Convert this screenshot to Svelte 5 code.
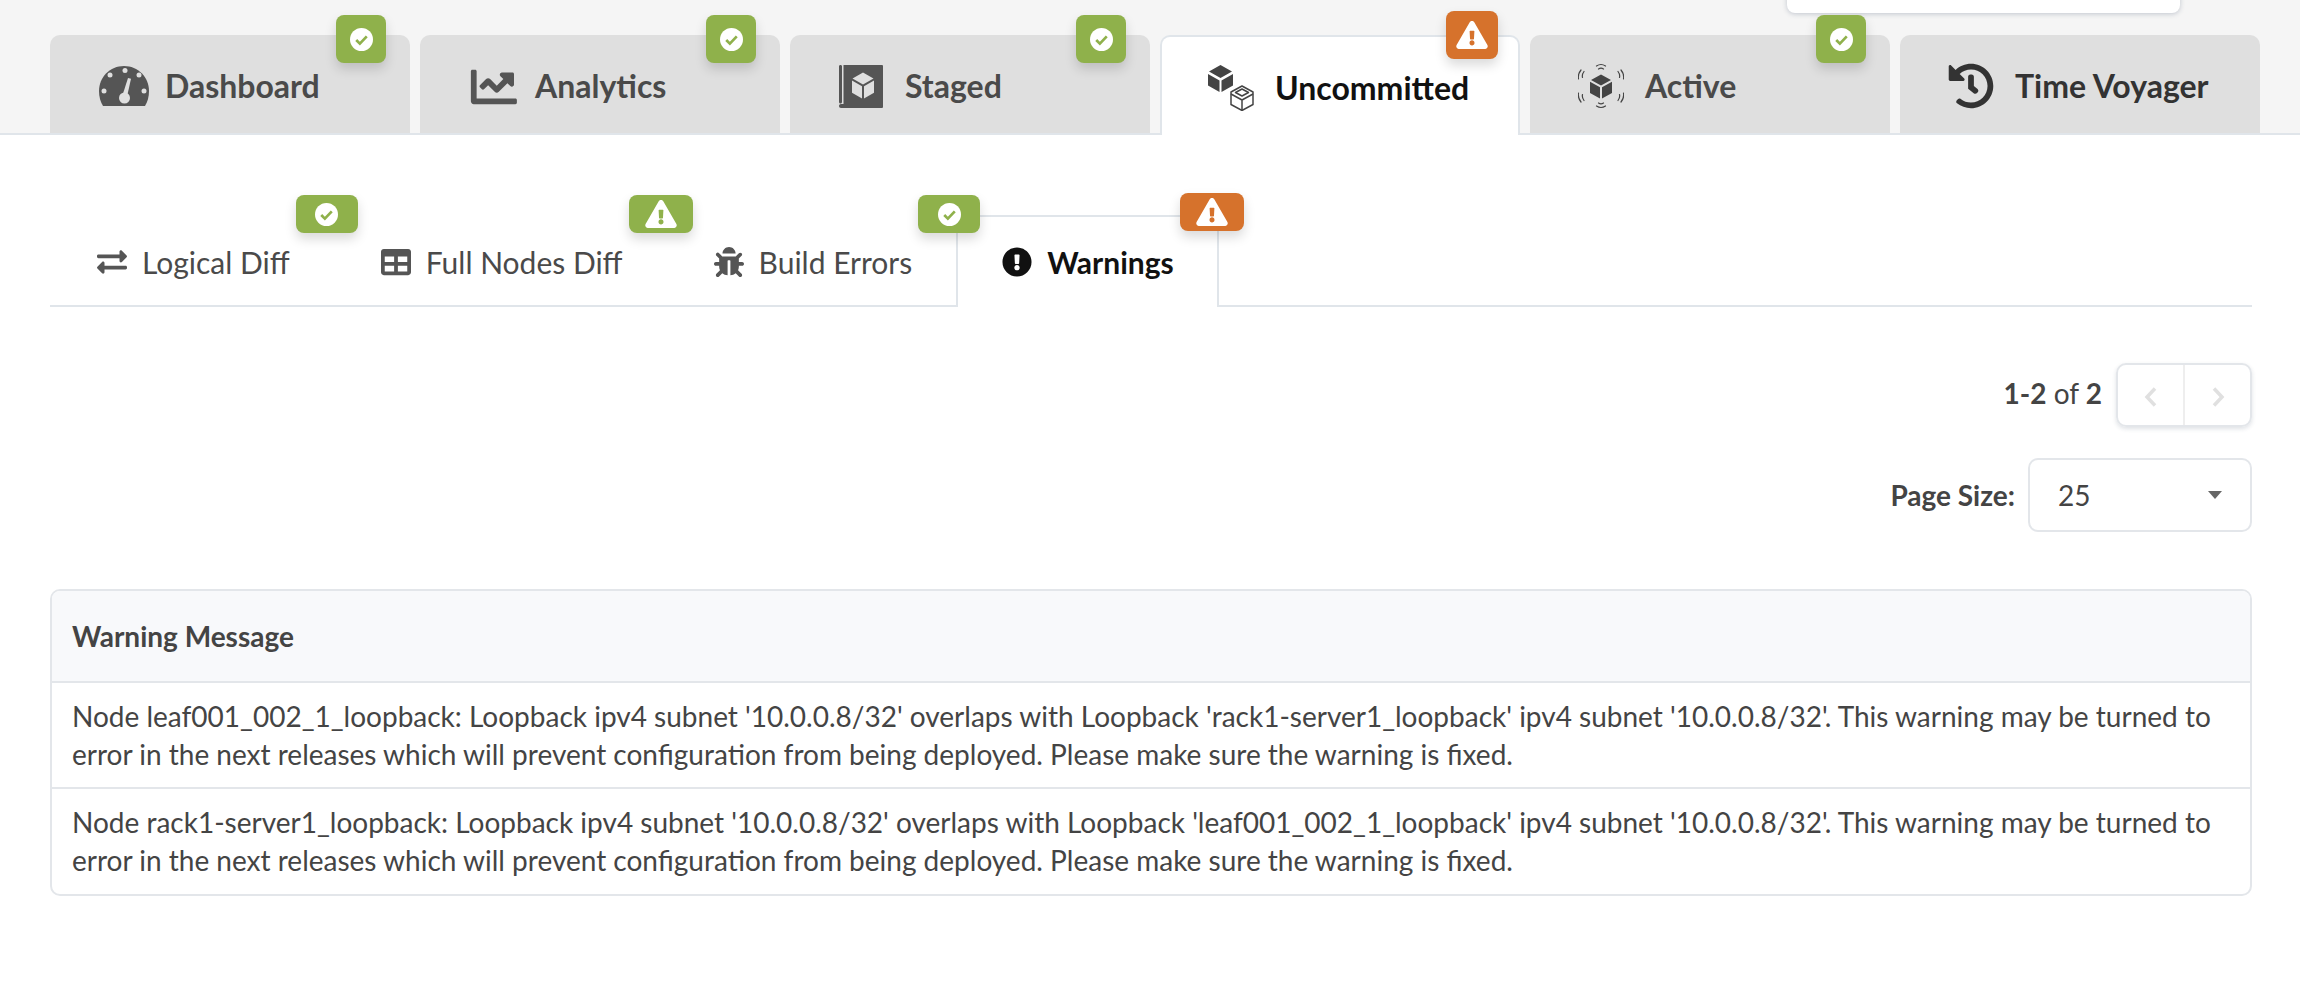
<script>
	const mainTabs = [
		{ id: 'dashboard', label: 'Dashboard', badge: 'ok' },
		{ id: 'analytics', label: 'Analytics', badge: 'ok' },
		{ id: 'staged', label: 'Staged', badge: 'ok' },
		{ id: 'uncommitted', label: 'Uncommitted', badge: 'warn', active: true },
		{ id: 'active', label: 'Active', badge: 'ok' },
		{ id: 'time', label: 'Time Voyager' }
	];

	const subTabs = [
		{ id: 'logical', label: 'Logical Diff', badge: 'ok', color: 'green' },
		{ id: 'full', label: 'Full Nodes Diff', badge: 'warn', color: 'green' },
		{ id: 'build', label: 'Build Errors', badge: 'ok', color: 'green' },
		{ id: 'warnings', label: 'Warnings', badge: 'warn', color: 'orange', active: true }
	];

	const warnings = [
		"Node leaf001_002_1_loopback: Loopback ipv4 subnet '10.0.0.8/32' overlaps with Loopback 'rack1-server1_loopback' ipv4 subnet '10.0.0.8/32'. This warning may be turned to error in the next releases which will prevent configuration from being deployed. Please make sure the warning is fixed.",
		"Node rack1-server1_loopback: Loopback ipv4 subnet '10.0.0.8/32' overlaps with Loopback 'leaf001_002_1_loopback' ipv4 subnet '10.0.0.8/32'. This warning may be turned to error in the next releases which will prevent configuration from being deployed. Please make sure the warning is fixed."
	];
</script>

{#snippet statusIcon(kind, color)}
	{#if kind === 'ok'}
		<svg class="status-ok" viewBox="0 0 24 24">
			<circle cx="12" cy="12" r="12" fill="#fff" />
			<path d="M6.5 12.5l3.8 3.8 7.2-7.6" fill="none" stroke={color} stroke-width="2.8" />
		</svg>
	{:else}
		<svg class="status-warn" viewBox="0 0 576 512">
			<path fill="#fff" d="M569.517 440.013C587.975 472.007 564.806 512 527.94 512H48.054c-36.937 0-59.999-40.055-41.577-71.987L246.423 24.035c18.467-32.009 64.72-31.951 83.154 0l239.94 416.978zM288 354c-25.405 0-46 20.595-46 46s20.595 46 46 46 46-20.595 46-46-20.595-46-46-46zm-43.673-165.346l7.418 136c.347 6.364 5.609 11.346 11.982 11.346h48.546c6.373 0 11.635-4.982 11.982-11.346l7.418-136c.375-6.874-5.098-12.654-11.982-12.654h-63.383c-6.884 0-12.356 5.78-11.981 12.654z" />
		</svg>
	{/if}
{/snippet}

{#snippet mainIcon(id)}
	{#if id === 'dashboard'}
		<svg class="main-icon" viewBox="-2 0 46 46" overflow="visible">
			<path fill="#555" d="M24 3C10 3-1 14-1 28c0 6 1.500 11 4 15h42c2.500-4 4-9 4-15C49 14 38 3 24 3z" />
			<g fill="#dfdfdf">
				<circle cx="25" cy="7.500" r="2.500" />
				<circle cx="10" cy="12" r="2.500" />
				<circle cx="39" cy="12" r="2.500" />
				<circle cx="4" cy="28" r="2.500" />
				<circle cx="44" cy="28" r="2.500" />
				<circle cx="24.500" cy="35" r="5.500" />
				<path d="M28 15l3 .8-4 18h-5z" />
			</g>
		</svg>
	{:else if id === 'analytics'}
		<svg class="main-icon" viewBox="-32 -10 512 512" overflow="visible">
			<path fill="#555" d="M496 384H64V80c0-8.840-7.160-16-16-16H16C7.160 64 0 71.160 0 80v336c0 17.670 14.330 32 32 32h464c8.840 0 16-7.160 16-16v-32c0-8.840-7.160-16-16-16zM464 96H345.940c-21.380 0-32.090 25.850-16.970 40.970l32.400 32.400L288 242.750l-73.370-73.370c-12.500-12.500-32.760-12.500-45.250 0l-68.690 68.690c-6.250 6.250-6.250 16.380 0 22.630l22.620 22.620c6.250 6.250 16.380 6.250 22.630 0L192 237.250l73.370 73.370c12.500 12.500 32.760 12.500 45.250 0l96-96 32.400 32.400c15.120 15.120 40.970 4.410 40.970-16.970V112c.010-8.840-7.150-16-16-16z" />
		</svg>
	{:else if id === 'staged'}
		<svg class="main-icon" viewBox="0 0 46 46">
			<path fill="#555" d="M1 3.500c0-1 .6-1.500 1.500-1.500S4 2.500 4 3.500V39c0 .8-.6 1.500-1.500 1.500S1 39.800 1 39zM5.500 2H44a1 1 0 0 1 1 1v41a1 1 0 0 1-1 1H3c-1.200 0-2-.8-2-2s.8-2 2-2h2.500z" />
			<path fill="#dfdfdf" d="M25 9.500l-10.500 6 10.500 6 10.500-6zM14 17.500l10 5.800v12.200l-10-5.800zM36 17.500v12.200l-10 5.800V23.300z" />
		</svg>
	{:else if id === 'uncommitted'}
		<svg class="main-icon" viewBox="0 0 46 46">
			<path fill="#444" d="M12.500 0L24 6.500 12.500 13 1 6.500zM0 9l11.500 6.500V27L0 20.500zM25 9v11.500L13.500 27V15.500z" />
			<g fill="none" stroke="#444" stroke-width="1.500" stroke-linejoin="round">
				<path d="M34 21l11 6v12.500L34 45.500l-11-6V27z" />
				<path d="M23 29l11 6 11-6M34 35v10.500" />
				<path d="M34 24l6.500 3.500-6.500 3.500-6.500-3.500z" />
			</g>
		</svg>
	{:else if id === 'active'}
		<svg class="main-icon" viewBox="0 0 46 46">
			<path fill="#444" d="M23 11.500l10 5.500-10 5.500-10-5.500zM12 18.800l10 5.500v11.200l-10-5.500zM34 18.800v11.200l-10 5.500V24.300z" />
			<g fill="none" stroke="#444" stroke-width="1.200" stroke-linecap="round">
				<path d="M18.500 3c3-2 6-2 9 0M20.500 6c1.600-1 3.400-1 5 0" />
				<path d="M18.500 43c3 2 6 2 9 0M20.500 40c1.600 1 3.400 1 5 0" />
				<path d="M3 7c-2.500 3-3 6-2.500 9M6 8.500c-1.500 2-2 4-1.500 6" />
				<path d="M43 7c2.500 3 3 6 2.500 9M40 8.500c1.500 2 2 4 1.500 6" />
				<path d="M3 39c-2.500-3-3-6-2.500-9M6 37.500c-1.500-2-2-4-1.500-6" />
				<path d="M43 39c2.500-3 3-6 2.500-9M40 37.500c1.500-2 2-4 1.500-6" />
			</g>
		</svg>
	{:else if id === 'time'}
		<svg class="main-icon" viewBox="0 0 512 512">
			<path fill="#333" d="M504 255.531c.253 136.640-111.180 248.372-247.820 248.468-59.015.042-113.223-20.530-155.822-54.911-11.077-8.940-11.905-25.541-1.839-35.607l11.267-11.267c8.609-8.609 22.353-9.551 31.891-1.984C173.062 425.135 212.781 440 256 440c101.705 0 184-82.311 184-184 0-101.705-82.311-184-184-184-48.814 0-93.149 18.969-126.068 49.932l50.754 50.754c10.080 10.080 2.941 27.314-11.313 27.314H24c-8.837 0-16-7.163-16-16V38.627c0-14.254 17.234-21.393 27.314-11.314l49.372 49.372C129.209 34.136 189.552 8 256 8c136.810 0 247.747 110.780 248 247.531zm-180.912 78.784l9.823-12.630c8.138-10.463 6.253-25.542-4.210-33.679L288 256.349V152c0-13.255-10.745-24-24-24h-16c-13.255 0-24 10.745-24 24v135.651l65.409 50.874c10.463 8.137 25.541 6.253 33.679-4.210z" />
		</svg>
	{/if}
{/snippet}

{#snippet subIcon(id)}
	{#if id === 'logical'}
		<svg class="sub-icon" viewBox="0 0 512 512">
			<path fill="#555" d="M0 168v-16c0-13.255 10.745-24 24-24h360V80c0-21.367 25.899-32.042 40.971-16.971l80 80c9.372 9.373 9.372 24.569 0 33.941l-80 80C409.956 271.982 384 261.456 384 240v-48H24c-13.255 0-24-10.745-24-24zm488 152H128v-48c0-21.314-25.862-32.080-40.971-16.971l-80 80c-9.372 9.373-9.372 24.569 0 33.941l80 80C102.057 463.997 128 453.437 128 432v-48h360c13.255 0 24-10.745 24-24v-16c0-13.255-10.745-24-24-24z" />
		</svg>
	{:else if id === 'full'}
		<svg class="sub-icon" viewBox="0 0 512 512">
			<path fill="#555" d="M464 32H48C21.490 32 0 53.490 0 80v352c0 26.510 21.490 48 48 48h416c26.510 0 48-21.490 48-48V80c0-26.510-21.490-48-48-48zM224 416H64v-96h160v96zm0-160H64v-96h160v96zm224 160H288v-96h160v96zm0-160H288v-96h160v96z" />
		</svg>
	{:else if id === 'build'}
		<svg class="sub-icon" viewBox="0 0 512 512">
			<path fill="#555" d="M511.988 288.900c-.478 17.430-15.217 31.100-32.653 31.100H424v16c0 21.864-4.882 42.584-13.600 61.145l60.228 60.228c12.496 12.497 12.496 32.758 0 45.255-12.498 12.497-32.759 12.496-45.256 0l-54.736-54.736C345.886 467.965 314.351 480 280 480V236c0-6.627-5.373-12-12-12h-24c-6.627 0-12 5.373-12 12v244c-34.351 0-65.886-12.035-90.636-32.108l-54.736 54.736c-12.498 12.497-32.759 12.496-45.256 0-12.496-12.497-12.496-32.758 0-45.255l60.228-60.228C92.882 378.584 88 357.864 88 336v-16H32.666C15.230 320 .491 306.330.013 288.900-.484 270.816 14.028 256 32 256h56v-58.745l-46.628-46.628c-12.496-12.497-12.496-32.758 0-45.255 12.498-12.497 32.758-12.497 45.256 0L141.255 160h229.489l54.627-54.627c12.498-12.497 32.758-12.497 45.256 0 12.496 12.497 12.496 32.758 0 45.255L424 197.255V256h56c17.972 0 32.484 14.816 31.988 32.900zM257 0c-61.856 0-112 50.144-112 112h224C369 50.144 318.856 0 257 0z" />
		</svg>
	{:else}
		<svg class="sub-icon" viewBox="0 0 512 512">
			<path fill="#111" d="M504 256c0 136.997-111.043 248-248 248S8 392.997 8 256C8 119.083 119.043 8 256 8s248 111.083 248 248zm-248 50c-25.405 0-46 20.595-46 46s20.595 46 46 46 46-20.595 46-46-20.595-46-46-46zm-43.673-165.346l7.418 136c.347 6.364 5.609 11.346 11.982 11.346h48.546c6.373 0 11.635-4.982 11.982-11.346l7.418-136c.375-6.874-5.098-12.654-11.982-12.654h-63.383c-6.884 0-12.356 5.780-11.981 12.654z" />
		</svg>
	{/if}
{/snippet}

<div class="page">
	<div class="popup"></div>

	<nav class="main-tabs">
		{#each mainTabs as tab}
			<div class="main-tab" class:active={tab.active} class:time={tab.id === 'time'}>
				{@render mainIcon(tab.id)}
				<span>{tab.label}</span>
				{#if tab.badge}
					<div class="badge main-badge" class:orange={tab.badge === 'warn'}>
						{@render statusIcon(tab.badge, '#8fb14b')}
					</div>
				{/if}
			</div>
		{/each}
	</nav>

	<div class="content">
		<div class="sub-tabs">
			{#each subTabs as tab}
				<div class="sub-tab" class:active={tab.active}>
					{@render subIcon(tab.id)}
					<span>{tab.label}</span>
					<div class="badge sub-badge" class:orange={tab.color === 'orange'} class:wide={tab.badge === 'warn'}>
						{@render statusIcon(tab.badge, '#8fb14b')}
					</div>
				</div>
			{/each}
		</div>

		<div class="controls">
			<div class="pager-row">
				<div class="count"><b>1-2</b> of <b>2</b></div>
				<div class="pager">
					<div class="page-btn">
						<svg viewBox="0 0 14 22"><path d="M11 2.500L3 11l8 8.500" fill="none" stroke="#e0e0e0" stroke-width="3.500" /></svg>
					</div>
					<div class="page-btn">
						<svg viewBox="0 0 14 22"><path d="M3 2.500L11 11l-8 8.500" fill="none" stroke="#e0e0e0" stroke-width="3.500" /></svg>
					</div>
				</div>
			</div>
			<div class="size-row">
				<b>Page Size:</b>
				<div class="select">
					<span>25</span>
					<i class="caret"></i>
				</div>
			</div>
		</div>

		<div class="table-wrap">
			<table>
				<thead>
					<tr><th>Warning Message</th></tr>
				</thead>
				<tbody>
					{#each warnings as message}
						<tr><td>{message}</td></tr>
					{/each}
				</tbody>
			</table>
		</div>
	</div>
</div>

<style>
	:global(body) {
		background: #fff;
		font-family: Lato, "Open Sans", sans-serif;
		color: #444;
	}

	.page {
		position: relative;
		min-height: 995px;
		overflow: hidden;
	}

	.popup {
		position: absolute;
		top: -20px;
		left: 1787px;
		width: 393px;
		height: 33px;
		background: #fff;
		border-radius: 8px;
		box-shadow: 0 1px 5px rgba(40, 60, 90, 0.25);
	}

	.main-tabs {
		display: flex;
		gap: 10px;
		height: 135px;
		box-sizing: border-box;
		padding: 35px 0 0 50px;
		background: #f5f5f5;
		border-bottom: 2px solid #e0e5ea;
	}

	.main-tab {
		position: relative;
		display: flex;
		align-items: center;
		gap: 21px;
		width: 360px;
		height: 98px;
		box-sizing: border-box;
		padding: 3px 0 0 48px;
		background: #dfdfdf;
		border-radius: 10px 10px 0 0;
		font-size: 32px;
		font-weight: 700;
		color: #4a4a4a;
	}

	.main-tab.time {
		color: #333;
	}

	.main-tab.active {
		height: 100px;
		padding-left: 46px;
		background: #fff;
		border: 2px solid #e0e5ea;
		border-bottom: 0;
		color: #111;
	}

	.main-icon {
		width: 46px;
		height: 46px;
		flex: none;
	}

	.badge {
		position: absolute;
		z-index: 1;
		display: flex;
		align-items: center;
		justify-content: center;
		background: #8fb14b;
		border-radius: 8px;
		box-shadow: 0 6px 12px rgba(0, 0, 0, 0.15);
	}

	.badge.orange {
		background: #d6722c;
	}

	.main-badge {
		top: -20px;
		right: 24px;
		width: 50px;
		height: 48px;
	}

	.main-badge.orange {
		top: -26px;
		right: 20px;
		width: 52px;
	}

	.status-ok {
		width: 23px;
		height: 23px;
	}

	.status-warn {
		width: 32px;
		height: 28px;
	}

	.content {
		padding: 80px 48px 0 50px;
	}

	.sub-tabs {
		display: flex;
		height: 90px;
		border-bottom: 2px solid #e0e5ea;
	}

	.sub-tab {
		position: relative;
		display: flex;
		align-items: center;
		gap: 15px;
		box-sizing: border-box;
		height: 90px;
		padding: 4px 44px 0 47px;
		font-size: 30px;
		color: #4a4a4a;
	}

	.sub-tab.active {
		height: 92px;
		background: #fff;
		border: 2px solid #e0e5ea;
		border-bottom: 0;
		padding: 0 43px 0 44px;
		font-weight: 700;
		color: #111;
	}

	.sub-icon {
		width: 30px;
		height: 30px;
		flex: none;
	}

	.sub-badge {
		top: -20px;
		right: -24px;
		width: 62px;
		height: 38px;
	}

	.sub-badge.wide {
		width: 64px;
		right: -26px;
	}

	.sub-badge.orange {
		top: -24px;
		right: -27px;
	}

	.controls {
		display: flex;
		flex-direction: column;
		align-items: flex-end;
		margin-top: 56px;
	}

	.pager-row,
	.size-row {
		display: flex;
		align-items: center;
		font-size: 28px;
	}

	.pager-row {
		gap: 14px;
	}

	.count {
		margin-bottom: 5px;
	}

	.size-row {
		gap: 13px;
		margin-top: 31px;
	}

	.pager {
		display: flex;
		width: 136px;
		height: 64px;
		box-sizing: border-box;
		border: 2px solid #e3e6ea;
		border-radius: 10px;
		box-shadow: 0 2px 4px rgba(40, 60, 90, 0.15);
	}

	.page-btn {
		flex: 1;
		display: flex;
		align-items: center;
		justify-content: center;
		padding-top: 3px;
	}

	.page-btn + .page-btn {
		border-left: 2px solid #eee;
	}

	.page-btn svg {
		width: 14px;
		height: 22px;
	}

	.select {
		display: flex;
		align-items: center;
		justify-content: space-between;
		width: 224px;
		height: 74px;
		box-sizing: border-box;
		padding: 0 28px 0 28px;
		border: 2px solid #e3e6ea;
		border-radius: 10px;
		font-size: 28px;
	}

	.caret {
		width: 0;
		height: 0;
		border-left: 7px solid transparent;
		border-right: 7px solid transparent;
		border-top: 8px solid #666;
	}

	.table-wrap {
		margin-top: 57px;
		border: 2px solid #e3e6ea;
		border-radius: 10px;
		overflow: hidden;
	}

	table {
		width: 100%;
		border-collapse: separate;
		border-spacing: 0;
		font-size: 28px;
		line-height: 38px;
	}

	th {
		height: 92px;
		box-sizing: border-box;
		padding: 0 20px;
		background: #f8f9fb;
		border-bottom: 2px solid #e3e6ea;
		font-weight: 700;
		text-align: left;
	}

	td {
		padding: 14px 20px;
		border-bottom: 2px solid #e3e6ea;
	}

	tr:last-child td {
		padding-bottom: 15px;
		border-bottom: 0;
	}
</style>
